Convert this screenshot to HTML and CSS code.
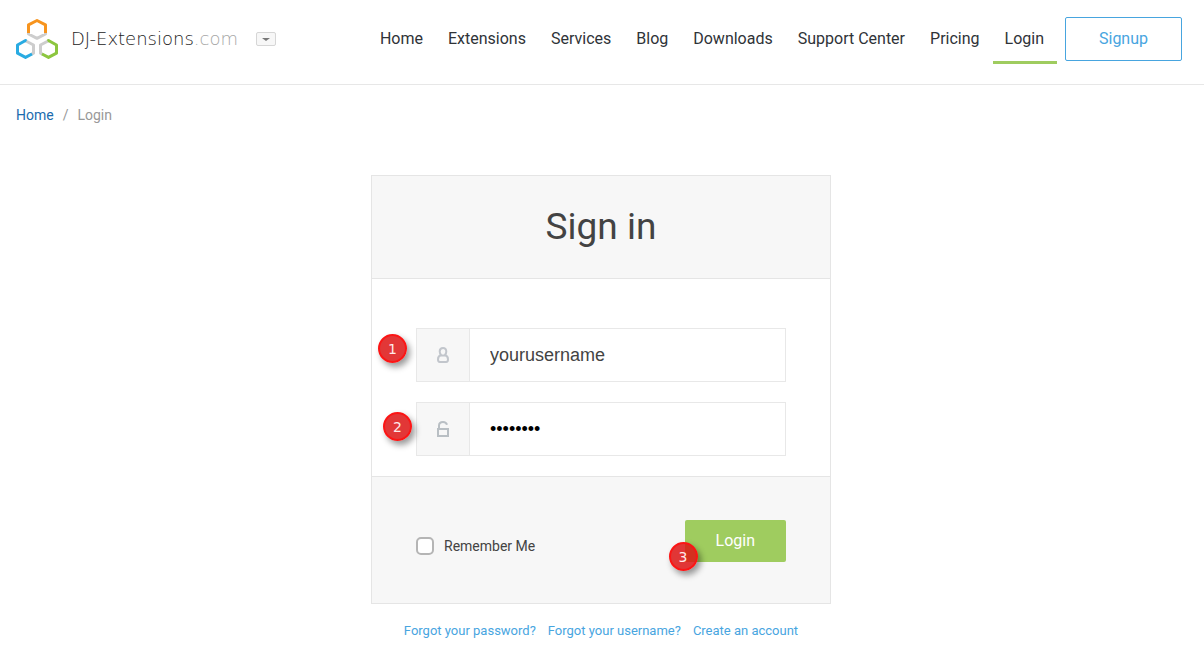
FILE: index.html
```html
<!DOCTYPE html>
<html lang="en">
<head>
<meta charset="utf-8">
<meta name="viewport" content="width=device-width, initial-scale=1">
<title>Login - DJ-Extensions.com</title>
<link rel="stylesheet" href="styles.css">
</head>
<body>
<header class="header">
  <div class="brand">
    <a class="logo" href="#">
      <svg class="logo-mark" viewBox="0 0 42 40" width="42" height="40" fill="none" stroke-width="3" stroke-linejoin="round" aria-hidden="true">
        <path stroke="#cdcdcd" d="M12.500 12v3L21 19.300l8.500-4.300v-3"/>
        <path stroke="#f7941e" d="M12.500 14V5.800L21 1.500l8.500 4.300V14"/>
        <path stroke="#cdcdcd" d="M9 21.500l8.500 4.500v8.200L15 35.500"/>
        <path stroke="#29abe2" d="M10.500 22L9.500 21.500 1.500 26v8.200l8 4.200 6.500-3.400"/>
        <path stroke="#cdcdcd" d="M33 21.500L24.500 26v8.200L27 35.500"/>
        <path stroke="#8cc63f" d="M31.500 22l1-.5 8 4.500v8.200l-8 4.200-6.500-3.400"/>
      </svg>
      <span class="logo-text">DJ-Extensions<span class="logo-tld">.com</span></span>
    </a>
    <button class="switcher" type="button" aria-label="Switch site"></button>
  </div>
  <nav class="nav" aria-label="Main">
    <a class="nav-link" href="#">Home</a>
    <a class="nav-link" href="#">Extensions</a>
    <a class="nav-link" href="#">Services</a>
    <a class="nav-link" href="#">Blog</a>
    <a class="nav-link" href="#">Downloads</a>
    <a class="nav-link" href="#">Support Center</a>
    <a class="nav-link" href="#">Pricing</a>
    <a class="nav-link active" href="#">Login</a>
    <a class="signup" href="#">Signup</a>
  </nav>
</header>
<main class="main">
  <nav class="breadcrumb" aria-label="Breadcrumb">
    <a href="#">Home</a><span>/</span><span>Login</span>
  </nav>
  <form class="card">
    <h1 class="card-title">Sign in</h1>
    <div class="fields">
      <div class="field">
        <label class="addon" for="username" aria-label="Username">
          <svg viewBox="0 0 14 18" width="14" height="18" fill="none" stroke="#c2c6cc" stroke-width="2" stroke-linejoin="round" aria-hidden="true">
            <path d="M7 2C4.800 2 3.700 3.500 3.700 5.500c0 1.600.6 2.600 1.400 3.500C3 9.700 2 11 2 13.200c0 1.800.6 2.800 1.800 2.800h6.400c1.200 0 1.800-1 1.800-2.800 0-2.200-1-3.500-3.100-4.200.8-.9 1.400-1.900 1.400-3.500C10.300 3.500 9.200 2 7 2zM5 9.500h4"/>
          </svg>
        </label>
        <input class="input" id="username" type="text" value="yourusername">
        <span class="badge badge-user">1</span>
      </div>
      <div class="field">
        <label class="addon" for="password" aria-label="Password">
          <svg viewBox="0 0 14 18" width="14" height="18" fill="none" stroke="#b9bfc4" stroke-width="2" aria-hidden="true">
            <path d="M2 9h10v7H2zM3 9V5.500C3 3.300 4.600 2 7 2c2 0 3.500 1 4 2.800"/>
          </svg>
        </label>
        <input class="input password" id="password" type="password" value="password">
        <span class="badge badge-pass">2</span>
      </div>
    </div>
    <div class="actions">
      <label class="remember"><input class="check" type="checkbox">Remember Me</label>
      <div class="submit">
        <button class="login" type="submit">Login</button>
        <span class="badge badge-login">3</span>
      </div>
    </div>
  </form>
  <div class="links">
    <a href="#">Forgot your password?</a>
    <a href="#">Forgot your username?</a>
    <a href="#">Create an account</a>
  </div>
</main>
</body>
</html>
```
FILE: styles.css
```css
* { box-sizing: border-box; }

body {
  margin: 0;
  background: #fff;
  color: #434343;
  font-family: Roboto, "Liberation Sans", sans-serif;
  font-size: 14px;
  line-height: 20px;
}

a { color: #48a5df; text-decoration: none; }

.header {
  display: flex;
  justify-content: space-between;
  align-items: flex-start;
  padding: 17px 22px 20px 16px;
  border-bottom: 1px solid #e7e7e7;
}

.brand { display: flex; align-items: center; gap: 18px; padding-top: 2px; }
.logo { display: flex; align-items: center; gap: 13px; }
.logo-mark { display: block; }
.logo-text {
  color: #222;
  font-family: "DejaVu Sans", sans-serif;
  font-size: 18px;
  font-weight: 200;
}
.logo-tld { color: #a6a6a6; }

.switcher {
  display: flex;
  align-items: center;
  justify-content: center;
  width: 20px;
  height: 14px;
  padding: 0;
  border: 1px solid #d6d6d6;
  border-radius: 2px;
  background: #f7f7f7;
}
.switcher::before {
  content: "";
  border: 4px solid transparent;
  border-top: 3px solid #777;
  border-bottom: 0;
}

.nav { display: flex; align-items: flex-start; font-size: 16px; }
.nav-link { padding: 12px 13px 12px 12px; color: #2f3338; }
.nav-link.active { border-bottom: 3px solid #9fcc5f; }
.signup {
  margin-left: 8px;
  padding: 11px 33px;
  border: 1px solid #48a5df;
  border-radius: 2px;
}

.main { padding: 20px 18px 28px 16px; }

.breadcrumb { display: flex; gap: 9px; color: #999; }
.breadcrumb a { color: #1b6cae; }

.card {
  max-width: 460px;
  margin: 50px auto 0;
  border: 1px solid #e5e5e5;
}
.card-title {
  margin: 0;
  padding: 27px 20px;
  border-bottom: 1px solid #e5e5e5;
  background: #f7f7f7;
  font-size: 37px;
  font-weight: 400;
  line-height: 48px;
  text-align: center;
}

.fields { display: grid; gap: 20px; padding: 49px 44px 20px; }
.field {
  position: relative;
  display: flex;
  height: 54px;
  border: 1px solid #e8e8e8;
}
.addon {
  display: flex;
  flex: none;
  align-items: center;
  justify-content: center;
  width: 53px;
  border-right: 1px solid #e8e8e8;
  background: #f7f7f7;
}
.input {
  flex: 1;
  min-width: 0;
  padding: 0 20px;
  border: 0;
  background: #fff;
  color: #434343;
  font-family: "Liberation Sans", Arial, sans-serif;
  font-size: 18px;
}
.input.password { color: #000; }

.actions {
  display: flex;
  align-items: center;
  justify-content: space-between;
  padding: 43px 44px 41px;
  border-top: 1px solid #e5e5e5;
  background: #f7f7f7;
}
.remember { display: flex; align-items: center; gap: 10px; padding-top: 10px; }
.check {
  appearance: none;
  width: 18px;
  height: 18px;
  margin: 0;
  border: 2px solid #b5b5b5;
  border-radius: 5px;
  background: #fff;
}
.submit { position: relative; }
.login {
  display: block;
  padding: 11px 31px;
  border: 0;
  border-radius: 2px;
  background: #9fcc5f;
  color: #fff;
  font: 16px/20px Roboto, sans-serif;
}

.badge {
  position: absolute;
  display: flex;
  align-items: center;
  justify-content: center;
  width: 29px;
  height: 29px;
  border: 2px solid #fb1515;
  border-radius: 50%;
  background: rgba(221, 20, 20, 0.85);
  box-shadow: 3px 4px 6px rgba(0, 0, 0, 0.4);
  color: #ffeaea;
  font: 14px/20px "DejaVu Sans", sans-serif;
}
.badge-user { top: 5px; left: -39px; }
.badge-pass { top: 9px; left: -34px; }
.badge-login { top: 22px; left: -16px; }

.links {
  display: flex;
  flex-wrap: wrap;
  justify-content: center;
  gap: 12px;
  margin-top: 17px;
  font-size: 13px;
}
```
